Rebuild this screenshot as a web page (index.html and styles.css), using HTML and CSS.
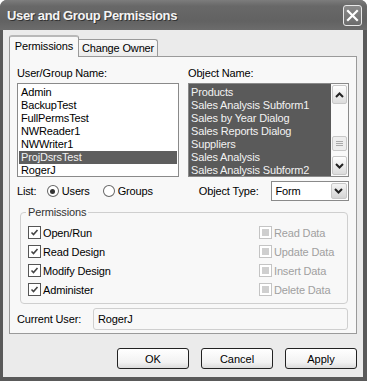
FILE: index.html
```html
<!DOCTYPE html>
<html lang="en">
<head>
    <meta charset="UTF-8">
    <meta name="viewport" content="width=device-width, initial-scale=1.0">
    <title>User and Group Permissions</title>
    <link rel="stylesheet" href="styles.css">
</head>
<body>
    <div class="window">
        <div class="titlebar">
            <span class="title">User and Group Permissions</span>
            <span class="close">
                <svg width="13" height="13" viewBox="0 0 13 13"><path d="M2 2 L11 11 M11 2 L2 11" stroke="#fff" stroke-width="2.2" stroke-linecap="square"/></svg>
            </span>
        </div>
        <div class="client">
            <div class="tabs">
                <div class="tab active">Permissions</div>
                <div class="tab">Change Owner</div>
            </div>
            <div class="panel">
                <div class="lists">
                    <div class="col">
                        <label class="lbl">User/Group Name:</label>
                        <div class="listbox">
                            <div class="item">Admin</div>
                            <div class="item">BackupTest</div>
                            <div class="item">FullPermsTest</div>
                            <div class="item">NWReader1</div>
                            <div class="item">NWWriter1</div>
                            <div class="item sel">ProjDsrsTest</div>
                            <div class="item">RogerJ</div>
                        </div>
                    </div>
                    <div class="col">
                        <label class="lbl">Object Name:</label>
                        <div class="listbox objects">
                            <div class="items">
                                <div class="item">Products</div>
                                <div class="item">Sales Analysis Subform1</div>
                                <div class="item">Sales by Year Dialog</div>
                                <div class="item">Sales Reports Dialog</div>
                                <div class="item">Suppliers</div>
                                <div class="item">Sales Analysis</div>
                                <div class="item">Sales Analysis Subform2</div>
                            </div>
                            <div class="scrollbar">
                                <div class="sbtn">
                                    <svg width="9" height="6" viewBox="0 0 9 6"><path d="M1 5 L4.5 1.5 L8 5" fill="none" stroke="#222" stroke-width="2"/></svg>
                                </div>
                                <div class="track">
                                    <div class="thumb">
                                        <i></i><i></i><i></i>
                                    </div>
                                </div>
                                <div class="sbtn">
                                    <svg width="9" height="6" viewBox="0 0 9 6"><path d="M1 1 L4.5 4.5 L8 1" fill="none" stroke="#222" stroke-width="2"/></svg>
                                </div>
                            </div>
                        </div>
                    </div>
                </div>

                <div class="row">
                    <span class="list-lbl">List:</span>
                    <span class="radio on"></span><span class="radio-text">Users</span>
                    <span class="radio"></span><span class="radio-text">Groups</span>
                    <span class="type-lbl">Object Type:</span>
                    <div class="select">
                        <span class="select-text">Form</span>
                        <span class="drop">
                            <svg width="9" height="6" viewBox="0 0 9 6"><path d="M1 1 L4.5 4.5 L8 1" fill="none" stroke="#222" stroke-width="2"/></svg>
                        </span>
                    </div>
                </div>

                <fieldset class="perms">
                    <legend>Permissions</legend>
                    <div class="checks">
                        <div class="check"><span class="box on"><svg width="9" height="9" viewBox="0 0 9 9"><path d="M1.5 4.5 L3.5 6.5 L7.5 2" fill="none" stroke="#444" stroke-width="1.6"/></svg></span>Open/Run</div>
                        <div class="check off"><span class="box dis"></span>Read Data</div>
                        <div class="check"><span class="box on"><svg width="9" height="9" viewBox="0 0 9 9"><path d="M1.5 4.5 L3.5 6.5 L7.5 2" fill="none" stroke="#444" stroke-width="1.6"/></svg></span>Read Design</div>
                        <div class="check off"><span class="box dis"></span>Update Data</div>
                        <div class="check"><span class="box on"><svg width="9" height="9" viewBox="0 0 9 9"><path d="M1.5 4.5 L3.5 6.5 L7.5 2" fill="none" stroke="#444" stroke-width="1.6"/></svg></span>Modify Design</div>
                        <div class="check off"><span class="box dis"></span>Insert Data</div>
                        <div class="check"><span class="box on"><svg width="9" height="9" viewBox="0 0 9 9"><path d="M1.5 4.5 L3.5 6.5 L7.5 2" fill="none" stroke="#444" stroke-width="1.6"/></svg></span>Administer</div>
                        <div class="check off"><span class="box dis"></span>Delete Data</div>
                    </div>
                </fieldset>

                <div class="current">
                    <span class="cur-lbl">Current User:</span>
                    <div class="cur-box">RogerJ</div>
                </div>
            </div>

            <div class="buttons">
                <button class="btn">OK</button>
                <button class="btn">Cancel</button>
                <button class="btn">Apply</button>
            </div>
        </div>
    </div>
</body>
</html>
```

FILE: styles.css
```css
body {
    margin: 0;
    font-family: 'Liberation Sans', Arial, sans-serif;
    font-size: 11px;
    letter-spacing: -0.15px;
    color: #000;
    background: #fff;
}
.window {
    width: 367px;
    height: 381px;
    box-sizing: border-box;
    background: #5a5a5a;
    border-radius: 7px 7px 0 0;
    padding: 0 4px 4px 3px;
    display: flex;
    flex-direction: column;
}
.titlebar {
    height: 30px;
    margin: 0 -4px 0 -3px;
    padding: 0 5px 0 7px;
    border-radius: 7px 7px 0 0;
    background: linear-gradient(#7c7c7c, #686868 20%, #626262 70%, #6c6c6c);
    display: flex;
    align-items: center;
    justify-content: space-between;
}
.title {
    color: #f4f4f4;
    font-weight: bold;
    font-size: 13px;
    letter-spacing: -0.35px;
    text-shadow: 1px 1px 0 #333;
}
.close {
    width: 19px;
    height: 21px;
    box-sizing: border-box;
    border: 1px solid #e8e8e8;
    border-radius: 3px;
    background: linear-gradient(#8a8a8a, #6c6c6c);
    display: flex;
    align-items: center;
    justify-content: center;
}
.client {
    flex: 1;
    background: #ebebeb;
    padding: 5px 6px 0 6px;
    display: flex;
    flex-direction: column;
}
.tabs {
    display: flex;
    align-items: flex-end;
    height: 21px;
}
.tab {
    width: 79px;
    height: 17px;
    box-sizing: border-box;
    line-height: 16px;
    text-align: center;
    white-space: nowrap;
    border: 1px solid #9a9a9a;
    border-bottom: none;
    border-left: none;
    border-radius: 0 3px 0 0;
    background: linear-gradient(#fafafa, #ececec);
}
.tab.active {
    width: 70px;
    height: 22px;
    line-height: 19px;
    background: #f8f8f8;
    border-left: 1px solid #9a9a9a;
    border-top: 2px solid #b8b8b8;
    border-radius: 3px 3px 0 0;
    position: relative;
    z-index: 1;
    margin-bottom: -1px;
}
.panel {
    border: 1px solid #9a9a9a;
    background: #f8f8f8;
    height: 278px;
    box-sizing: border-box;
    padding: 10px 7px 0 7px;
}
.lists {
    display: grid;
    grid-template-columns: 162px 161px;
    column-gap: 9px;
}
.lbl {
    display: block;
    height: 13px;
    line-height: 13px;
    margin-bottom: 3px;
}
.listbox {
    height: 94px;
    box-sizing: border-box;
    border: 1px solid #8a8a8a;
    background: #fff;
    padding: 2px 1px;
}
.item {
    height: 13px;
    line-height: 13px;
    padding-left: 2px;
    white-space: nowrap;
}
.item.sel {
    background: #5e5e5e;
    color: #f2f2f2;
}
.objects {
    display: flex;
    padding: 0;
}
.objects .items {
    flex: 1;
    background: #5a5a5a;
    color: #f2f2f2;
    padding-top: 2px;
    overflow: hidden;
}
.scrollbar {
    width: 17px;
    display: flex;
    flex-direction: column;
    background: #fafafa;
}
.sbtn {
    height: 17px;
    margin: 1px;
    border: 1px solid #c8c8c8;
    border-radius: 2px;
    background: linear-gradient(#fff, #dcdcdc);
    display: flex;
    align-items: center;
    justify-content: center;
}
.track {
    flex: 1;
    display: flex;
    flex-direction: column;
    justify-content: flex-end;
}
.thumb {
    height: 13px;
    margin: 0 1px 4px;
    border: 1px solid #c8c8c8;
    border-radius: 2px;
    background: #eee;
    display: flex;
    flex-direction: column;
    justify-content: center;
    align-items: center;
    gap: 1px;
}
.thumb i {
    width: 7px;
    height: 1px;
    background: #aaa;
}
.row {
    display: flex;
    align-items: center;
    height: 20px;
    margin-top: 4px;
}
.list-lbl {
    width: 30px;
}
.radio {
    width: 12px;
    height: 12px;
    box-sizing: border-box;
    border: 1px solid #666;
    border-radius: 50%;
    background: #fff;
    margin-right: 3px;
    display: flex;
    align-items: center;
    justify-content: center;
}
.radio.on::after {
    content: "";
    width: 5px;
    height: 5px;
    border-radius: 50%;
    background: #333;
}
.radio-text {
    margin-right: 13px;
}
.type-lbl {
    margin-left: 33px;
    width: 73px;
}
.select {
    width: 78px;
    height: 20px;
    box-sizing: border-box;
    border: 1px solid #8a8a8a;
    background: #fff;
    display: flex;
    align-items: center;
    justify-content: space-between;
    padding: 0 1px 0 3px;
}
.drop {
    width: 16px;
    height: 16px;
    box-sizing: border-box;
    border: 1px solid #c8c8c8;
    border-radius: 2px;
    background: linear-gradient(#f4f4f4, #d4d4d4);
    display: flex;
    align-items: center;
    justify-content: center;
}
.perms {
    margin: 5px 1px 0 3px;
    padding: 4px 7px 4px 7px;
    border: 1px solid #cfcfcf;
    border-radius: 4px;
}
.perms legend {
    padding: 0 2px;
    margin-left: -2px;
    line-height: 13px;
    color: #333;
}
.checks {
    display: grid;
    grid-template-columns: 231px auto;
    grid-auto-rows: 19px;
}
.check {
    display: flex;
    align-items: center;
}
.check.off {
    color: #a0a0a0;
}
.box {
    width: 13px;
    height: 13px;
    box-sizing: border-box;
    border: 1px solid #555;
    background: #fff;
    margin-right: 2px;
    display: flex;
    align-items: center;
    justify-content: center;
}
.box.dis {
    border-color: #c4c4c4;
}
.box.dis::after {
    content: "";
    width: 7px;
    height: 7px;
    background: #cfcfcf;
}
.current {
    display: flex;
    align-items: center;
    margin-top: 4px;
}
.cur-lbl {
    width: 76px;
}
.cur-box {
    width: 255px;
    height: 22px;
    line-height: 20px;
    box-sizing: border-box;
    border: 1px solid #cfcfcf;
    border-radius: 3px;
    padding-left: 4px;
}
.buttons {
    display: flex;
    justify-content: flex-end;
    gap: 12px;
    margin-top: 14px;
}
.btn {
    width: 72px;
    height: 21px;
    padding: 0;
    border: 1px solid #222;
    border-radius: 3px;
    background: linear-gradient(#fff, #f2f2f2 70%, #dcdcdc);
    font-family: 'Liberation Sans', Arial, sans-serif;
    font-size: 11px;
    color: #000;
}
```
